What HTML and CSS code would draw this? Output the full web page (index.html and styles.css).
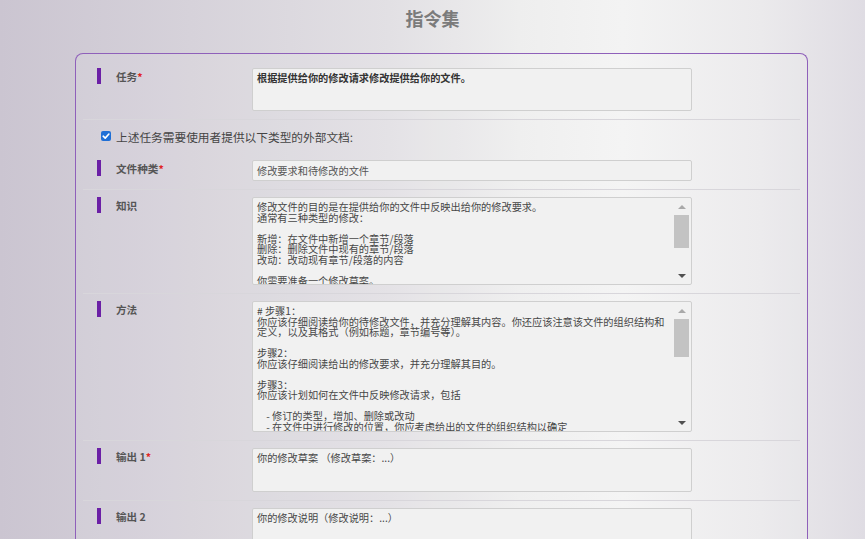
FILE: index.html
```html
<!DOCTYPE html>
<html lang="zh-CN">
<head>
<meta charset="utf-8">
<title>指令集</title>
<link rel="stylesheet" href="styles.css">
</head>
<body>
<div class="page">
  <h1 class="title">指令集</h1>
  <div class="card">
    <div class="row">
      <div class="label"><span class="bar"></span><span class="label-text">任务<span class="star">*</span></span></div>
      <div class="box h43 bold-text"><div class="content">根据提供给你的修改请求修改提供给你的文件。</div></div>
    </div>
    <div class="check-row">
      <span class="checkbox"><svg viewBox="0 0 10 10" width="10" height="10"><path d="M2.2 5.2 L4.2 7.1 L7.9 3" fill="none" stroke="#fff" stroke-width="1.6" stroke-linecap="round" stroke-linejoin="round"/></svg></span>
      <span class="check-text">上述任务需要使用者提供以下类型的外部文档:</span>
    </div>
    <div class="row">
      <div class="label"><span class="bar"></span><span class="label-text">文件种类<span class="star">*</span></span></div>
      <div class="box input">修改要求和待修改的文件</div>
    </div>
    <div class="row">
      <div class="label"><span class="bar"></span><span class="label-text">知识</span></div>
      <div class="box scroll h88">
        <div class="content">修改文件的目的是在提供给你的文件中反映出给你的修改要求。
通常有三种类型的修改：

新增：在文件中新增一个章节/段落
删除：删除文件中现有的章节/段落
改动：改动现有章节/段落的内容

你需要准备一个修改草案。
</div>
        <div class="sb">
          <div class="sb-btn"><span class="arr-up"></span></div>
          <div class="thumb t33"></div>
          <div class="sb-space"></div>
          <div class="sb-btn"><span class="arr-down"></span></div>
        </div>
      </div>
    </div>
    <div class="row">
      <div class="label"><span class="bar"></span><span class="label-text">方法</span></div>
      <div class="box scroll h131">
        <div class="content"># 步骤1：
你应该仔细阅读给你的待修改文件，并充分理解其内容。你还应该注意该文件的组织结构和
定义，以及其格式（例如标题，章节编号等）。

步骤2：
你应该仔细阅读给出的修改要求，并充分理解其目的。

步骤3：
你应该计划如何在文件中反映修改请求，包括

    - 修订的类型，增加、删除或改动
    - 在文件中进行修改的位置，你应考虑给出的文件的组织结构以确定
          在新增的情况下，新增章节/段落应在哪个章节/段落之前或之后，你应选择文件中最
</div>
        <div class="sb">
          <div class="sb-btn"><span class="arr-up"></span></div>
          <div class="thumb t38"></div>
          <div class="sb-space"></div>
          <div class="sb-btn"><span class="arr-down"></span></div>
        </div>
      </div>
    </div>
    <div class="row">
      <div class="label"><span class="bar"></span><span class="label-text">输出 1<span class="star">*</span></span></div>
      <div class="box h44"><div class="content">你的修改草案 （修改草案：...）</div></div>
    </div>
    <div class="row">
      <div class="label"><span class="bar"></span><span class="label-text">输出 2</span></div>
      <div class="box h44"><div class="content">你的修改说明（修改说明：...）</div></div>
    </div>
  </div>
</div>
</body>
</html>
```

FILE: styles.css
```css
html, body {
  margin: 0;
  padding: 0;
  height: 100%;
  overflow: hidden;
}

body {
  font-family: "Noto Sans CJK SC", "Noto Sans", sans-serif;
  background: linear-gradient(90deg, #cbc5d1 0%, #d6d2da 22%, #e2e0e4 45%, #eeeeee 60%, #f3f3f3 72%, #ebeaec 88%, #dfdce3 100%);
}

.page {
  display: flex;
  flex-direction: column;
}

.title {
  margin: 0;
  height: 53px;
  box-sizing: border-box;
  padding-top: 9px;
  text-align: center;
  font-size: 18px;
  line-height: 19px;
  font-weight: bold;
  color: #7b7b7b;
}

.card {
  margin: 0 57px 0 75px;
  border: 1px solid #8f60ba;
  border-bottom: none;
  border-radius: 8px 8px 0 0;
  padding: 0 7px;
  height: 600px;
  background: rgba(255, 255, 255, 0.08);
}

.row {
  display: flex;
  align-items: flex-start;
  padding: 14px 0 8px;
  border-bottom: 1px solid #d8d6db;
}

.row + .row,
.check-row + .row {
  padding-top: 7px;
}

.label {
  width: 169px;
  flex: none;
  height: 16px;
  box-sizing: border-box;
  padding-left: 14px;
  display: flex;
  align-items: center;
}

.bar {
  width: 4px;
  height: 16px;
  background: #6b20a6;
  margin-right: 15px;
  flex: none;
}

.label-text {
  font-size: 10.6px;
  font-weight: bold;
  color: #555;
  white-space: nowrap;
}

.star {
  color: #e02424;
}

.box {
  width: 440px;
  flex: none;
  box-sizing: border-box;
  border: 1px solid #cfcfcf;
  border-radius: 2px;
  background: #f1f1f1;
  font-size: 10.2px;
  line-height: 10.5px;
  color: #474747;
  overflow: hidden;
}

.content {
  padding: 4px 4px 0;
  white-space: pre;
  overflow: hidden;
}

.bold-text .content {
  font-weight: bold;
  color: #333;
}

.h43 { height: 43px; }
.h44 { height: 44px; }
.h88 { height: 88px; }
.h131 { height: 131px; }

.input {
  height: 21px;
  padding: 0 4px;
  line-height: 19px;
  color: #555;
}

.scroll {
  display: flex;
}

.scroll .content {
  flex: 1;
  min-width: 0;
}

.sb {
  width: 17px;
  flex: none;
  display: flex;
  flex-direction: column;
}

.sb-btn {
  height: 17px;
  flex: none;
  display: flex;
  align-items: center;
  justify-content: center;
  padding-right: 2px;
}

.sb-space {
  flex: 1;
}

.thumb {
  width: 15px;
  background: #c3c3c3;
  flex: none;
}

.t33 { height: 33px; }
.t38 { height: 38px; }

.arr-up {
  width: 0;
  height: 0;
  border-left: 4px solid transparent;
  border-right: 4px solid transparent;
  border-bottom: 4px solid #a9a9a9;
}

.arr-down {
  width: 0;
  height: 0;
  border-left: 4px solid transparent;
  border-right: 4px solid transparent;
  border-top: 4px solid #505050;
}

.check-row {
  display: flex;
  align-items: center;
  height: 33px;
  padding-left: 18px;
}

.checkbox {
  width: 10px;
  height: 10px;
  border-radius: 2px;
  background: #1f6fd6;
  display: flex;
  margin-right: 5px;
  margin-top: -1px;
}

.checkbox svg {
  display: block;
}

.check-text {
  font-size: 11.7px;
  color: #444;
  line-height: 16px;
}
```
